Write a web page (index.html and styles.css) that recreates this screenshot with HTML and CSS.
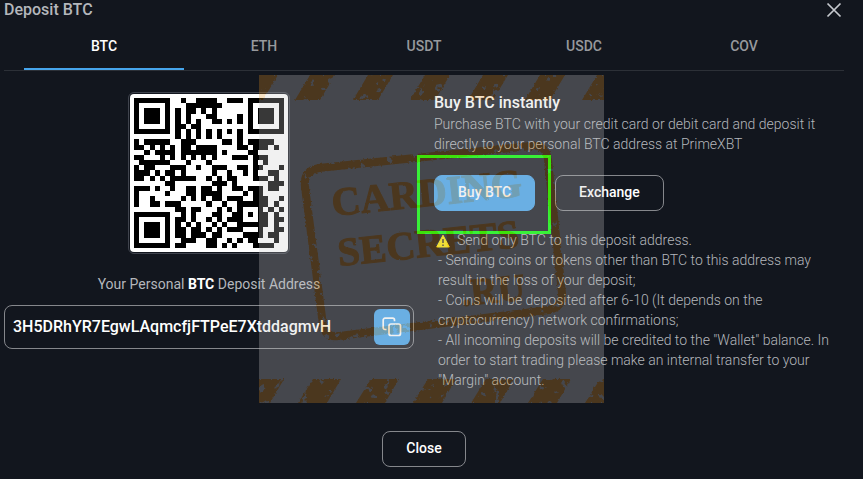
FILE: index.html
```html
<!DOCTYPE html>
<html lang="en">
<head>
<meta charset="utf-8">
<meta name="viewport" content="width=device-width, initial-scale=1">
<title>Deposit BTC</title>
<link rel="stylesheet" href="styles.css">
</head>
<body>
<main class="dialog">
  <header class="dialog-head">
    <h1 class="title">Deposit BTC</h1>
    <button class="dismiss" type="button" aria-label="Dismiss">
      <svg width="16" height="16" viewBox="0 0 16 16"><path d="M1.5 1.5l13 13M14.5 1.5l-13 13" fill="none" stroke="currentColor" stroke-width="1.7"/></svg>
    </button>
  </header>

  <nav class="tabs" role="tablist">
    <button class="tab active" type="button" role="tab" aria-selected="true">BTC</button>
    <button class="tab" type="button" role="tab">ETH</button>
    <button class="tab" type="button" role="tab">USDT</button>
    <button class="tab" type="button" role="tab">USDC</button>
    <button class="tab" type="button" role="tab">COV</button>
  </nav>

  <div class="columns">
    <section class="receive">
      <div class="qr-frame"><svg class="qr" id="qr" viewBox="0 0 29 29" shape-rendering="crispEdges" role="img"></svg></div>
      <label class="address-label" for="address">Your Personal <b>BTC</b> Deposit Address</label>
      <div class="address-box">
        <input class="address" id="address" type="text" readonly value="3H5DRhYR7EgwLAqmcfjFTPeE7XtddagmvH">
        <button class="copy" type="button" aria-label="Copy">
          <svg width="20" height="20" viewBox="0 0 20 20" fill="none" stroke="#fff" stroke-width="1.7"><rect x="7" y="7" width="11.5" height="11.5" rx="2"/><path d="M4.5 12.5H3a1.8 1.8 0 0 1-1.8-1.8V3A1.8 1.8 0 0 1 3 1.2h7.7A1.8 1.8 0 0 1 12.5 3v1.3"/></svg>
        </button>
      </div>
    </section>

    <section class="buy">
      <h2 class="buy-title">Buy BTC instantly</h2>
      <p class="buy-text">Purchase BTC with your credit card or debit card and deposit it directly to your personal BTC address at PrimeXBT</p>
      <div class="actions">
        <span class="marked"><button class="btn primary" type="button">Buy BTC</button></span>
        <button class="btn" type="button">Exchange</button>
      </div>
      <div class="notes">
        <p><svg class="warn" width="14" height="14" viewBox="0 0 14 14"><path d="M7 1.2L13.3 13H.7z" fill="#ffe600" stroke="#ffe600" stroke-linejoin="round"/><path d="M7 5v4M7 10.5v1.5" stroke="#222" stroke-width="1.4"/></svg>Send only BTC to this deposit address.</p>
        <p>- Sending coins or tokens other than BTC to this address may result in the loss of your deposit;</p>
        <p>- Coins will be deposited after 6-10 (It depends on the cryptocurrency) network confirmations;</p>
        <p>- All incoming deposits will be credited to the "Wallet" balance. In order to start trading please make an internal transfer to your "Margin" account.</p>
      </div>
    </section>
  </div>

  <footer class="foot"><button class="btn" type="button">Close</button></footer>

  <svg class="watermark" width="345" height="328" viewBox="0 0 345 328">
    <defs>
      <filter id="rough" x="0" y="0" width="345" height="328" filterUnits="userSpaceOnUse">
        <feTurbulence type="fractalNoise" baseFrequency="0.5" numOctaves="2" seed="4" result="fine"/>
        <feDisplacementMap in="SourceGraphic" in2="fine" scale="2" xChannelSelector="R" yChannelSelector="G"/>
      </filter>
      <filter id="worn" x="0" y="0" width="345" height="328" filterUnits="userSpaceOnUse">
        <feTurbulence type="fractalNoise" baseFrequency="0.5" numOctaves="2" seed="4" result="fine"/>
        <feDisplacementMap in="SourceGraphic" in2="fine" scale="3" xChannelSelector="R" yChannelSelector="G" result="rough"/>
        <feTurbulence type="fractalNoise" baseFrequency="0.12" numOctaves="4" seed="8"/>
        <feColorMatrix values="0 0 0 0 0  0 0 0 0 0  0 0 0 0 0  0 0 0 16 -4.6" result="holes"/>
        <feComposite in="rough" in2="holes" operator="in"/>
      </filter>
      <path id="stripe-top" d="M-6 0h25L4 25h-25z"/>
      <path id="stripe-low" d="M-3 304h28L11 328h-29z"/>
    </defs>
    <rect width="345" height="328" fill="#ccc"/>
    <g filter="url(#worn)" fill="#e19124">
      <use href="#stripe-top"/><use href="#stripe-top" x="57"/><use href="#stripe-top" x="115"/><use href="#stripe-top" x="172"/><use href="#stripe-top" x="230"/><use href="#stripe-top" x="287"/><use href="#stripe-top" x="344"/>
      <use href="#stripe-low"/><use href="#stripe-low" x="57"/><use href="#stripe-low" x="115"/><use href="#stripe-low" x="172"/><use href="#stripe-low" x="230"/><use href="#stripe-low" x="287"/><use href="#stripe-low" x="344"/>
      <path d="M46 112Q44 96 60 93L272 71Q287 69 289 85L303 218Q304 232 290 235L80 261Q66 263 64 250Z" fill="none" stroke="#e19124" stroke-width="8"/>
    </g>
    <g class="stamp" filter="url(#rough)">
      <text transform="translate(74 141) rotate(-6)" font-size="40">CARDING</text>
      <text transform="translate(80 191) rotate(-6)" font-size="40">SECRETS</text>
      <text transform="translate(203 231) rotate(-6)" font-size="38">.RU</text>
    </g>
  </svg>
</main>
<script src="qr.js"></script>
</body>
</html>
```
FILE: styles.css
```css
* { box-sizing: border-box; }

body {
  margin: 0;
  background: #12161e;
  color: #b4b7bc;
  font: 300 14px/20px Roboto, "Liberation Sans", sans-serif;
}

h1, h2, p { margin: 0; }

button, input { font: inherit; color: inherit; }

button {
  padding: 0;
  border: 0;
  background: none;
  cursor: pointer;
}

.dialog {
  position: relative;
  padding: 0 19px 12px 4px;
}

.dialog-head {
  display: flex;
  justify-content: space-between;
  height: 22px;
}

.title {
  font-size: 16px;
  line-height: 20px;
  font-weight: 500;
}

.dismiss {
  height: 20px;
  padding: 2px;
  color: #c6c9cf;
}

.dismiss svg { display: block; }

.tabs {
  display: flex;
  padding: 0 20px;
  border-bottom: 1px solid #2c3037;
}

.tab {
  flex: 1;
  height: 48px;
  padding-top: 2px;
  border-bottom: 2px solid transparent;
  color: #97999d;
  font-weight: 500;
}

.tab.active {
  border-color: #46a5ec;
  color: #fff;
}

.columns {
  display: grid;
  grid-template-columns: 1fr 1fr;
  gap: 20px;
  padding-top: 21px;
}

.receive {
  display: flex;
  flex-direction: column;
  align-items: center;
}

.qr-frame {
  padding: 1px;
  border: 1px solid #3f434d;
  border-radius: 6px;
}

.qr {
  display: block;
  width: 158px;
  height: 158px;
  padding: 4px;
  border-radius: 4px;
  background: #fff;
}

.address-label {
  margin: 20px 0 11px;
  font-weight: 400;
}

.address-label b {
  color: #fff;
  font-weight: 700;
}

.address-box {
  display: flex;
  align-items: center;
  width: 100%;
  height: 44px;
  padding: 0 3px 0 8px;
  border: 1px solid #85878c;
  border-radius: 8px;
}

.address {
  flex: 1;
  min-width: 0;
  padding: 0;
  border: 0;
  outline: 0;
  background: none;
  color: #fff;
  font-size: 16px;
  font-weight: 500;
}

.copy {
  display: grid;
  place-items: center;
  width: 36px;
  height: 36px;
  border-radius: 6px;
  background: #46a5ec;
}

.buy-title {
  color: #fff;
  font-size: 16px;
  line-height: 22px;
  font-weight: 500;
}

.actions {
  display: flex;
  gap: 20px;
  margin: 21px 0 19px;
}

.btn {
  height: 36px;
  padding: 0 23px 2px;
  border: 1px solid #85878c;
  border-radius: 8px;
  color: #fff;
  font-weight: 500;
}

.btn.primary {
  border-color: #46a5ec;
  background: #46a5ec;
}

.marked { position: relative; }

.marked::after {
  content: "";
  position: absolute;
  inset: -20px -16px -23px -17px;
  border: 3px solid #0f0;
  pointer-events: none;
}

.notes { padding-left: 4px; }

.warn {
  margin: 0 7px 0 -2px;
  vertical-align: -3px;
}

.foot {
  display: flex;
  justify-content: center;
  padding-top: 41px;
}

.watermark {
  position: absolute;
  inset: 0 0 2px;
  margin: auto;
  opacity: 0.275;
  pointer-events: none;
}

.stamp {
  fill: #e19124;
  stroke: #e19124;
  font-family: "Liberation Serif", serif;
  font-weight: 700;
}
```
FILE: qr.js
```js
// Encodes the deposit address as a version 3 QR code, error correction level M, mask 2.
const SIZE = 29, DATA = 44, ECC = 26;

function multiply(a, b) {
  let r = 0;
  for (; b; b >>= 1) {
    if (b & 1) r ^= a;
    a = a << 1;
    if (a & 256) a ^= 0x11d;
  }
  return r;
}

function codewords(text) {
  const bits = [];
  const push = (value, n) => { while (n--) bits.push((value >> n) & 1); };
  push(4, 4);
  push(text.length, 8);
  for (const c of text) push(c.charCodeAt(0), 8);
  push(0, 4);
  for (let pad = 0xec; bits.length < DATA * 8; pad ^= 0xec ^ 0x11) push(pad, 8);

  const bytes = [];
  for (let i = 0; i < bits.length; i += 8) bytes.push(parseInt(bits.slice(i, i + 8).join(""), 2));

  let gen = [1];
  for (let i = 0, root = 1; i < ECC; i++, root = multiply(root, 2)) {
    const next = gen.concat(0);
    gen.forEach((g, j) => { next[j + 1] ^= multiply(g, root); });
    gen = next;
  }
  const rest = bytes.concat(Array(ECC).fill(0));
  for (let i = 0; i < DATA; i++) {
    const lead = rest[i];
    gen.forEach((g, j) => { rest[i + j] ^= multiply(g, lead); });
  }
  return bytes.concat(rest.slice(DATA));
}

function build(text) {
  const grid = Array.from({ length: SIZE }, () => Array(SIZE).fill(null));
  const finder = (row, col) => {
    for (let y = -1; y < 8; y++) for (let x = -1; x < 8; x++) {
      if (!grid[row + y] || grid[row + y][col + x] === undefined) continue;
      const ring = Math.max(Math.abs(y - 3), Math.abs(x - 3));
      grid[row + y][col + x] = ring !== 2 && ring !== 4 ? 1 : 0;
    }
  };
  finder(0, 0);
  finder(0, SIZE - 7);
  finder(SIZE - 7, 0);
  for (let y = -2; y < 3; y++) for (let x = -2; x < 3; x++) {
    grid[22 + y][22 + x] = Math.max(Math.abs(y), Math.abs(x)) !== 1 ? 1 : 0;
  }
  for (let i = 8; i < SIZE - 8; i++) grid[6][i] = grid[i][6] = (i + 1) % 2;

  const format = [..."101111001111100"].map(Number);
  const near = [0, 1, 2, 3, 4, 5, 7, 8];
  for (let i = 0; i < 8; i++) {
    grid[8][near[i]] = format[i];
    grid[near[i]][8] = format[14 - i];
    grid[8][SIZE - 8 + i] = format[7 + i];
    if (i < 7) grid[SIZE - 1 - i][8] = format[i];
  }
  grid[SIZE - 8][8] = 1;

  const stream = codewords(text).flatMap(b => [7, 6, 5, 4, 3, 2, 1, 0].map(n => (b >> n) & 1));
  let at = 0, up = true;
  for (let right = SIZE - 1; right > 0; right -= 2, up = !up) {
    if (right === 6) right = 5;
    for (let i = 0; i < SIZE; i++) {
      const y = up ? SIZE - 1 - i : i;
      for (const x of [right, right - 1]) {
        if (grid[y][x] === null) grid[y][x] = (stream[at++] || 0) ^ (x % 3 === 0 ? 1 : 0);
      }
    }
  }
  return grid;
}

let d = "";
build(document.getElementById("address").value).forEach((row, y) => row.forEach((on, x) => {
  if (on) d += `M${x} ${y}h1v1h-1z`;
}));
const path = document.createElementNS("http://www.w3.org/2000/svg", "path");
path.setAttribute("d", d);
document.getElementById("qr").append(path);
```
